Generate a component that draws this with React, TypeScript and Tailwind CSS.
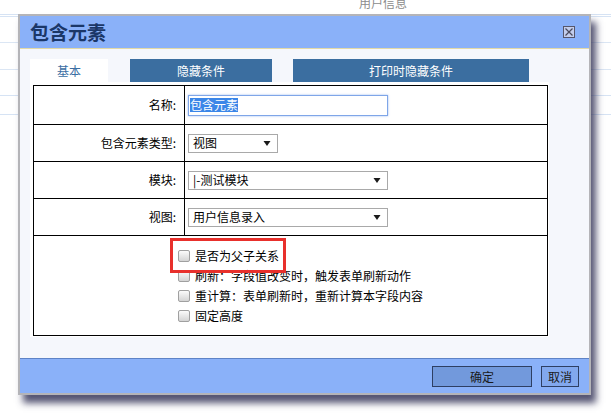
import React from 'react';

const Arrow = () => (
  <svg width="8" height="7" viewBox="0 0 8 7" className="shrink-0">
    <path d="M 0.5 1 L 7.5 1 L 4 6 Z" fill="#1a1a1a" />
  </svg>
);

const FakeSelect: React.FC<{ value: string; width: string }> = ({ value, width }) => (
  <div className={`flex h-[19px] items-center justify-between border border-[#a9a9a9] bg-white pl-[4px] pr-[6px] ${width}`}>
    <span className="text-[12px] leading-[14px] text-black">{value}</span>
    <Arrow />
  </div>
);

const Row: React.FC<{ label: string; h: string; children: React.ReactNode }> = ({ label, h, children }) => (
  <div className={`flex border-b border-black ${h}`}>
    <div className="flex w-[151px] items-center justify-end border-r border-black pr-[8px] text-[12px] text-black">
      {label}
    </div>
    <div className="flex items-center pl-[3px]">{children}</div>
  </div>
);

const Check: React.FC<{ label: string }> = ({ label }) => (
  <div className="flex h-[20px] items-center gap-[5px]">
    <span className="h-[12px] w-[12px] rounded-[2px] border border-[#a0a0a0] bg-linear-to-b from-[#fbfbfb] to-[#d4d4d4]" />
    <span className="text-[12px] leading-[14px] text-black">{label}</span>
  </div>
);

const App: React.FC = () => {
  return (
    <div className="relative h-[416px] w-[611px] overflow-hidden bg-white font-['Noto_Sans_CJK_SC','Noto_Sans',sans-serif]">
      {/* page behind the dialog */}
      <div className="flex flex-col">
        <div className="-mt-[5px] h-[16px] pl-[359px] text-[12px] leading-[16px] text-[#8c8c8c]">用户信息</div>
        <div className="mt-[3px] h-[1px] bg-[#d6e3f4]" />
        <div className="mt-[1px] h-[1px] bg-[#d6e3f4]" />
        <div className="mt-[25px] h-[1px] bg-[#dbe6f4]" />
        <div className="mt-[26px] h-[1px] bg-[#dbe6f4]" />
        <div className="mt-[25px] h-[1px] bg-[#d6e3f4]" />
        <div className="mt-[18px] h-[1px] bg-[#d6e3f4]" />
      </div>

      {/* dialog */}
      <div className="absolute left-[18px] top-[14px] w-[573px] border-2 border-[#b4b4b8] shadow-[5px_8px_7px_rgba(55,55,90,0.85)]">
        <div className="flex h-[32px] items-center justify-between bg-[#8ab1f9] pl-[10px] pr-[14px]">
          <span className="text-[19px] font-bold leading-[24px] text-[#1b3768]">包含元素</span>
          <span className="flex h-[12px] w-[12px] items-center justify-center border border-[#56566a] bg-[#c3cdec]">
            <svg width="10" height="10" viewBox="0 0 10 10">
              <path d="M 1.5 1.5 L 8.5 8.5 M 8.5 1.5 L 1.5 8.5" stroke="#4a4a5c" strokeWidth="1.2" />
            </svg>
          </span>
        </div>
        <div className="h-[1px] bg-[#e2d9a6]" />

        <div className="h-[309px] bg-[#f5f7fc] pl-[10px] pt-[10px]">
          <div className="flex h-[23px] text-[12px] leading-[23px]">
            <div className="w-[78px] bg-white text-center text-[#3b6ea3]">基本</div>
            <div className="ml-[22px] w-[142px] bg-[#3b6ea0] text-center text-white">隐藏条件</div>
            <div className="ml-[21px] w-[236px] bg-[#3b6ea0] text-center text-white">打印时隐藏条件</div>
          </div>

          <div className="h-[255px] w-[519px] bg-white pl-[3px] pr-[2px] pt-[3px]">
            <div className="w-[515px] border border-black">
              <Row label="名称:" h="h-[39px]">
                <div className="flex h-[21px] w-[200px] items-center border border-[#7fa6e8] bg-white pl-[1px] shadow-[0_0_2px_rgba(90,140,230,0.6)]">
                  <span className="bg-[#3b86e8] text-[12px] leading-[14px] text-white">包含元素</span>
                </div>
              </Row>
              <Row label="包含元素类型:" h="h-[37px]">
                <FakeSelect value="视图" width="w-[90px]" />
              </Row>
              <Row label="模块:" h="h-[37px]">
                <FakeSelect value="|-测试模块" width="w-[200px]" />
              </Row>
              <Row label="视图:" h="h-[37px]">
                <FakeSelect value="用户信息录入" width="w-[200px]" />
              </Row>
              <div className="relative h-[99px] pl-[144px] pt-[10px]">
                <Check label="是否为父子关系" />
                <Check label="刷新：字段值改变时，触发表单刷新动作" />
                <Check label="重计算：表单刷新时，重新计算本字段内容" />
                <Check label="固定高度" />
                <div className="absolute left-[136px] top-[2px] h-[35px] w-[116px] border-[3px] border-[#e8302c]" />
              </div>
            </div>
          </div>
        </div>

        <div className="flex h-[35px] justify-end gap-[9px] border-t border-[#5e83c6] bg-[#8ab1f9] pr-[10px] pt-[7px]">
          <button className="h-[21px] w-[100px] border border-[#2e3f63] bg-[#7299dc] text-[12px] leading-[19px] text-[#1a1a1a]">确定</button>
          <button className="h-[21px] w-[38px] border border-[#2e3f63] bg-[#82a8ee] text-[12px] leading-[19px] text-[#1a1a1a]">取消</button>
        </div>
      </div>
    </div>
  );
};

export default App;
